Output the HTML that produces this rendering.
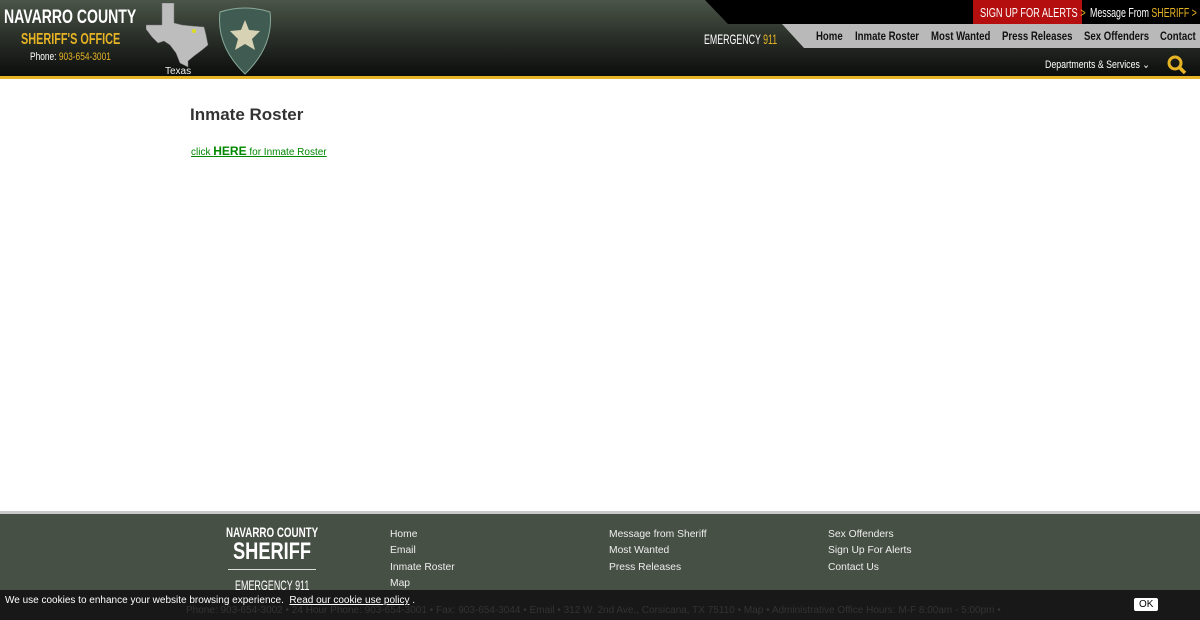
<!DOCTYPE html>
<html><head><style>
*{margin:0;padding:0;box-sizing:border-box}
body{width:1200px;height:620px;overflow:hidden;background:#fff;font-family:"Liberation Sans",sans-serif;position:relative}
.hdr{position:absolute;left:0;top:0;width:1200px;height:79px;background:linear-gradient(#4b5548,#2c322b 45%,#0c0d0c);border-bottom:3px solid #e6b325}
.c{position:absolute;white-space:nowrap;transform-origin:left}
.topblk{position:absolute;left:705px;top:0;width:495px;height:24px;background:#000;clip-path:polygon(0 0,100% 0,100% 100%,23px 100%)}
.navg{position:absolute;left:782px;top:24px;width:418px;height:24px;background:#b9b9b9;clip-path:polygon(0 0,100% 0,100% 100%,22px 100%)}
.nv{position:absolute;top:29px;color:#111;font-size:12px;font-weight:bold;white-space:nowrap;transform:scaleX(.8);transform-origin:left}
.foot{position:absolute;left:0;top:511px;width:1200px;height:109px;background:#475045;border-top:3px solid #c9c9c9}
.fl{position:absolute;color:#eee;font-size:10.3px;line-height:16.3px}
.ck{position:absolute;left:0;top:590px;width:1200px;height:30px;background:rgba(20,20,20,.93);color:#fff;font-size:10px}
</style></head><body>
<div class="hdr"></div>
<div class="c" style="left:4px;top:7px;color:#fff;font-size:19px;font-weight:bold;transform:scaleX(.74)">NAVARRO COUNTY</div>
<div class="c" style="left:21px;top:31px;color:#e6b325;font-size:16px;font-weight:bold;transform:scaleX(.68)">SHERIFF'S OFFICE</div>
<div class="c" style="left:30px;top:51px;color:#fff;font-size:11px;transform:scaleX(.76)">Phone: <span style="color:#e6b325">903-654-3001</span></div>
<svg style="position:absolute;left:146px;top:3px" width="66" height="64"><polygon points="16,0 28,0 28,20 36,22 46,23 58,24 60,32 62,42 56,47 48,53 42,58 42,64 34,60 30,50 24,42 18,38 12,40 6,34 0,26 0,22 16,22" fill="#bdbdbd" stroke="#777" stroke-width=".5"/><circle cx="48" cy="28" r="2" fill="#dd2"/></svg>
<div class="c" style="left:165px;top:66px;color:#eee;font-size:10px">Texas</div>
<svg style="position:absolute;left:216px;top:6px" width="58" height="70"><path d="M4 6 Q29 -2 54 6 Q58 40 29 68 Q0 40 4 6Z" fill="#3f5b52" stroke="#8a9" stroke-width="1"/><polygon points="29,14 33,24 44,25 36,33 39,44 29,38 19,44 22,33 14,25 25,24" fill="#d8d2b5"/></svg>
<div class="topblk"></div>
<div style="position:absolute;left:973px;top:0;width:109px;height:24px;background:#b40e0e"></div>
<div class="c" style="left:980px;top:5px;color:#fff;font-size:13px;transform:scaleX(.71)">SIGN UP FOR ALERTS <span style="color:#e6b325">&gt;</span></div>
<div class="c" style="left:1090px;top:5px;color:#fff;font-size:13px;transform:scaleX(.68)">Message From <span style="color:#e6b325">SHERIFF &gt;</span></div>
<div class="navg"></div>
<div class="c" style="left:704px;top:31px;color:#fff;font-size:14px;transform:scaleX(.63)">EMERGENCY <span style="color:#e6b325">911</span></div>
<div class="nv" style="left:816px">Home</div>
<div class="nv" style="left:855px">Inmate Roster</div>
<div class="nv" style="left:931px">Most Wanted</div>
<div class="nv" style="left:1002px">Press Releases</div>
<div class="nv" style="left:1084px">Sex Offenders</div>
<div class="nv" style="left:1160px">Contact</div>
<div class="c" style="left:1045px;top:58px;color:#fff;font-size:11px;transform:scaleX(.8)">Departments &amp; Services ⌄</div>
<svg style="position:absolute;left:1167px;top:55px" width="20" height="20"><circle cx="8" cy="8" r="6" fill="none" stroke="#e6b325" stroke-width="3"/><line x1="12" y1="12" x2="18" y2="18" stroke="#e6b325" stroke-width="3.5"/></svg>
<div style="position:absolute;left:190px;top:105px;font-size:17px;font-weight:bold;color:#333">Inmate Roster</div>
<div style="position:absolute;left:191px;top:144px;font-size:10px;color:#080;text-decoration:underline">click <b style="font-size:12px">HERE</b> for Inmate Roster</div>
<div class="foot"></div>
<div class="c" style="left:226px;top:524px;color:#fff;font-size:14px;font-weight:bold;transform:scaleX(.7)">NAVARRO COUNTY</div>
<div class="c" style="left:233px;top:538px;color:#fff;font-size:24px;font-weight:bold;transform:scaleX(.76)">SHERIFF</div>
<div style="position:absolute;left:228px;top:569px;width:88px;height:1px;background:#ddd"></div>
<div class="c" style="left:235px;top:577px;color:#fff;font-size:14px;transform:scaleX(.64)">EMERGENCY 911</div>
<div class="fl" style="left:390px;top:527px">Home<br>Email<br>Inmate Roster<br>Map</div>
<div class="fl" style="left:609px;top:527px">Message from Sheriff<br>Most Wanted<br>Press Releases</div>
<div class="fl" style="left:828px;top:527px">Sex Offenders<br>Sign Up For Alerts<br>Contact Us</div>
<div class="ck">
<div style="position:absolute;left:5px;top:5px;white-space:nowrap">We use cookies to enhance your website browsing experience. &nbsp;<u>Read our cookie use policy</u> .</div>
<div style="position:absolute;left:186px;top:15px;color:#333;font-size:10px;white-space:nowrap">Phone: 903-654-3002 &bull; 24 Hour Phone: 903-654-3001 &bull; Fax: 903-654-3044 &bull; Email &bull; 312 W. 2nd Ave., Corsicana, TX 75110 &bull; Map &bull; Administrative Office Hours: M-F 8:00am - 5:00pm &bull;</div>
<div style="position:absolute;left:1134px;top:8px;background:#fff;color:#000;font-size:10px;padding:0 5px;border-radius:2px;line-height:13px">OK</div>
</div>
</body></html>
